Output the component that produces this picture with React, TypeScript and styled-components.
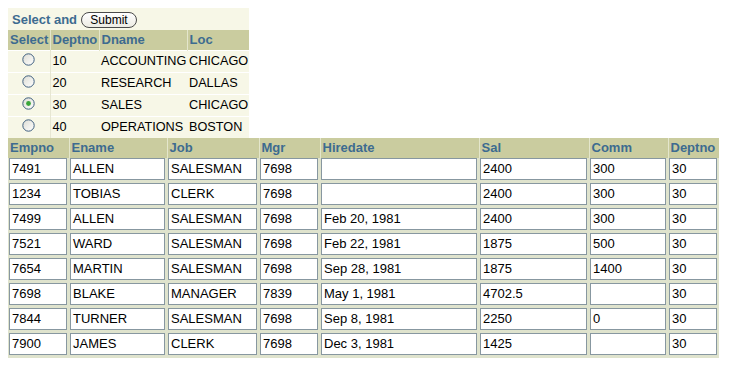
import styled, { createGlobalStyle } from "styled-components";

const GlobalStyle = createGlobalStyle`
  body {
    margin: 8px;
    background: #ffffff;
    font-family: "Liberation Sans", Arial, sans-serif;
    font-size: 13px;
    color: #000000;
  }
`;

interface Dept {
  deptno: number;
  dname: string;
  loc: string;
}

interface Emp {
  empno: string;
  ename: string;
  job: string;
  mgr: string;
  hiredate: string;
  sal: string;
  comm: string;
  deptno: string;
}

const depts: Dept[] = [
  { deptno: 10, dname: "ACCOUNTING", loc: "CHICAGO" },
  { deptno: 20, dname: "RESEARCH", loc: "DALLAS" },
  { deptno: 30, dname: "SALES", loc: "CHICAGO" },
  { deptno: 40, dname: "OPERATIONS", loc: "BOSTON" },
];

const deptColumns = [
  { label: "Select", width: 42 },
  { label: "Deptno", width: 49 },
  { label: "Dname", width: 88 },
  { label: "Loc", width: 62 },
];

const emps: Emp[] = [
  { empno: "7491", ename: "ALLEN", job: "SALESMAN", mgr: "7698", hiredate: "", sal: "2400", comm: "300", deptno: "30" },
  { empno: "1234", ename: "TOBIAS", job: "CLERK", mgr: "7698", hiredate: "", sal: "2400", comm: "300", deptno: "30" },
  { empno: "7499", ename: "ALLEN", job: "SALESMAN", mgr: "7698", hiredate: "Feb 20, 1981", sal: "2400", comm: "300", deptno: "30" },
  { empno: "7521", ename: "WARD", job: "SALESMAN", mgr: "7698", hiredate: "Feb 22, 1981", sal: "1875", comm: "500", deptno: "30" },
  { empno: "7654", ename: "MARTIN", job: "SALESMAN", mgr: "7698", hiredate: "Sep 28, 1981", sal: "1875", comm: "1400", deptno: "30" },
  { empno: "7698", ename: "BLAKE", job: "MANAGER", mgr: "7839", hiredate: "May 1, 1981", sal: "4702.5", comm: "", deptno: "30" },
  { empno: "7844", ename: "TURNER", job: "SALESMAN", mgr: "7698", hiredate: "Sep 8, 1981", sal: "2250", comm: "0", deptno: "30" },
  { empno: "7900", ename: "JAMES", job: "CLERK", mgr: "7698", hiredate: "Dec 3, 1981", sal: "1425", comm: "", deptno: "30" },
];

const empColumns: { key: keyof Emp; label: string; width: number }[] = [
  { key: "empno", label: "Empno", width: 61 },
  { key: "ename", label: "Ename", width: 98 },
  { key: "job", label: "Job", width: 92 },
  { key: "mgr", label: "Mgr", width: 61 },
  { key: "hiredate", label: "Hiredate", width: 159 },
  { key: "sal", label: "Sal", width: 110 },
  { key: "comm", label: "Comm", width: 79 },
  { key: "deptno", label: "Deptno", width: 51 },
];

const Radio = ({ checked }: { checked: boolean }) => (
  <svg width="13" height="13" viewBox="0 0 13 13">
    <defs>
      <linearGradient id="radioFill" x1="0" y1="0" x2="1" y2="1">
        <stop offset="0" stopColor="#dcdcd4" />
        <stop offset="1" stopColor="#ffffff" />
      </linearGradient>
    </defs>
    <circle cx="6.5" cy="6.5" r="5.7" fill="url(#radioFill)" stroke="#3f5f7f" strokeWidth="1" />
    {checked && <circle cx="6.5" cy="6.5" r="2.4" fill="#3aa53a" />}
  </svg>
);

const App = () => (
  <>
    <GlobalStyle />
    <DeptTable>
      <colgroup>
        {deptColumns.map((c) => (
          <Col key={c.label} $width={c.width} />
        ))}
      </colgroup>
      <tbody>
        <tr>
          <TitleCell colSpan={4}>
            <TitleBar>
              <TitleText>Select and</TitleText>
              <SubmitButton type="button">Submit</SubmitButton>
            </TitleBar>
          </TitleCell>
        </tr>
        <tr>
          {deptColumns.map((c) => (
            <HeaderCell key={c.label}>{c.label}</HeaderCell>
          ))}
        </tr>
        {depts.map((d) => (
          <tr key={d.deptno}>
            <SelectCell>
              <Radio checked={d.deptno === 30} />
            </SelectCell>
            <DeptCell>{d.deptno}</DeptCell>
            <DeptCell>{d.dname}</DeptCell>
            <DeptCell>{d.loc}</DeptCell>
          </tr>
        ))}
      </tbody>
    </DeptTable>
    <EmpTable>
      <colgroup>
        {empColumns.map((c) => (
          <Col key={c.key} $width={c.width} />
        ))}
      </colgroup>
      <thead>
        <tr>
          {empColumns.map((c) => (
            <HeaderCell key={c.key}>{c.label}</HeaderCell>
          ))}
        </tr>
      </thead>
      <tbody>
        {emps.map((e, i) => (
          <tr key={i}>
            {empColumns.map((c) => (
              <EmpCell key={c.key}>
                <FieldBox>{e[c.key]}</FieldBox>
              </EmpCell>
            ))}
          </tr>
        ))}
      </tbody>
    </EmpTable>
  </>
);
export default App;

const Col = styled.col<{ $width: number }>`
  width: ${({ $width }) => $width}px;
`;

const DeptTable = styled.table`
  border-collapse: collapse;
  border-spacing: 0;
  background: #f7f7e7;
  width: 241px;
  table-layout: fixed;
`;

const TitleCell = styled.td`
  height: 22px;
  padding: 1px 0 0 4px;
  box-sizing: border-box;
`;

const TitleBar = styled.div`
  display: flex;
  align-items: center;
  gap: 4px;
  white-space: nowrap;
`;

const TitleText = styled.span`
  font-weight: bold;
  color: #3d6b90;
  font-size: 13px;
`;

const SubmitButton = styled.button`
  height: 16px;
  width: 56px;
  padding: 0;
  border: 1px solid #4a4a4a;
  border-radius: 8px;
  background: linear-gradient(#ffffff, #ecebe3);
  font-family: "Liberation Sans", Arial, sans-serif;
  font-size: 12px;
  line-height: 14px;
  color: #000000;
`;

const HeaderCell = styled.th`
  height: 20px;
  padding: 0 0 0 2px;
  box-sizing: border-box;
  background: #cacc9f;
  color: #3d6b90;
  font-weight: bold;
  font-size: 13px;
  text-align: left;
  border-left: 1px solid #e4e6cc;
  white-space: nowrap;
  overflow: hidden;
  &:first-child {
    border-left: none;
  }
`;

const SelectCell = styled.td`
  height: 21px;
  padding: 0;
  text-align: center;
  vertical-align: middle;
  border-top: 1px solid #ffffff;
  border-right: 1px solid #e6e6d2;
  line-height: 0;
  svg {
    margin-top: -3px;
  }
`;

const DeptCell = styled.td`
  height: 21px;
  padding: 0 0 0 2px;
  border-top: 1px solid #ffffff;
  white-space: nowrap;
  overflow: hidden;
  font-size: 12.7px;
`;

const EmpTable = styled.table`
  border-collapse: collapse;
  border-spacing: 0;
  background: #dfe3cd;
  table-layout: fixed;
  width: 711px;
`;

const EmpCell = styled.td`
  padding: 0 2px 3px 1px;
  height: 25px;
  box-sizing: border-box;
  vertical-align: bottom;
`;

const FieldBox = styled.div`
  box-sizing: border-box;
  height: 22px;
  line-height: 20px;
  padding: 0 2px;
  border: 1px solid #8797a0;
  background: #ffffff;
  white-space: nowrap;
  overflow: hidden;
  font-size: 13px;
`;
